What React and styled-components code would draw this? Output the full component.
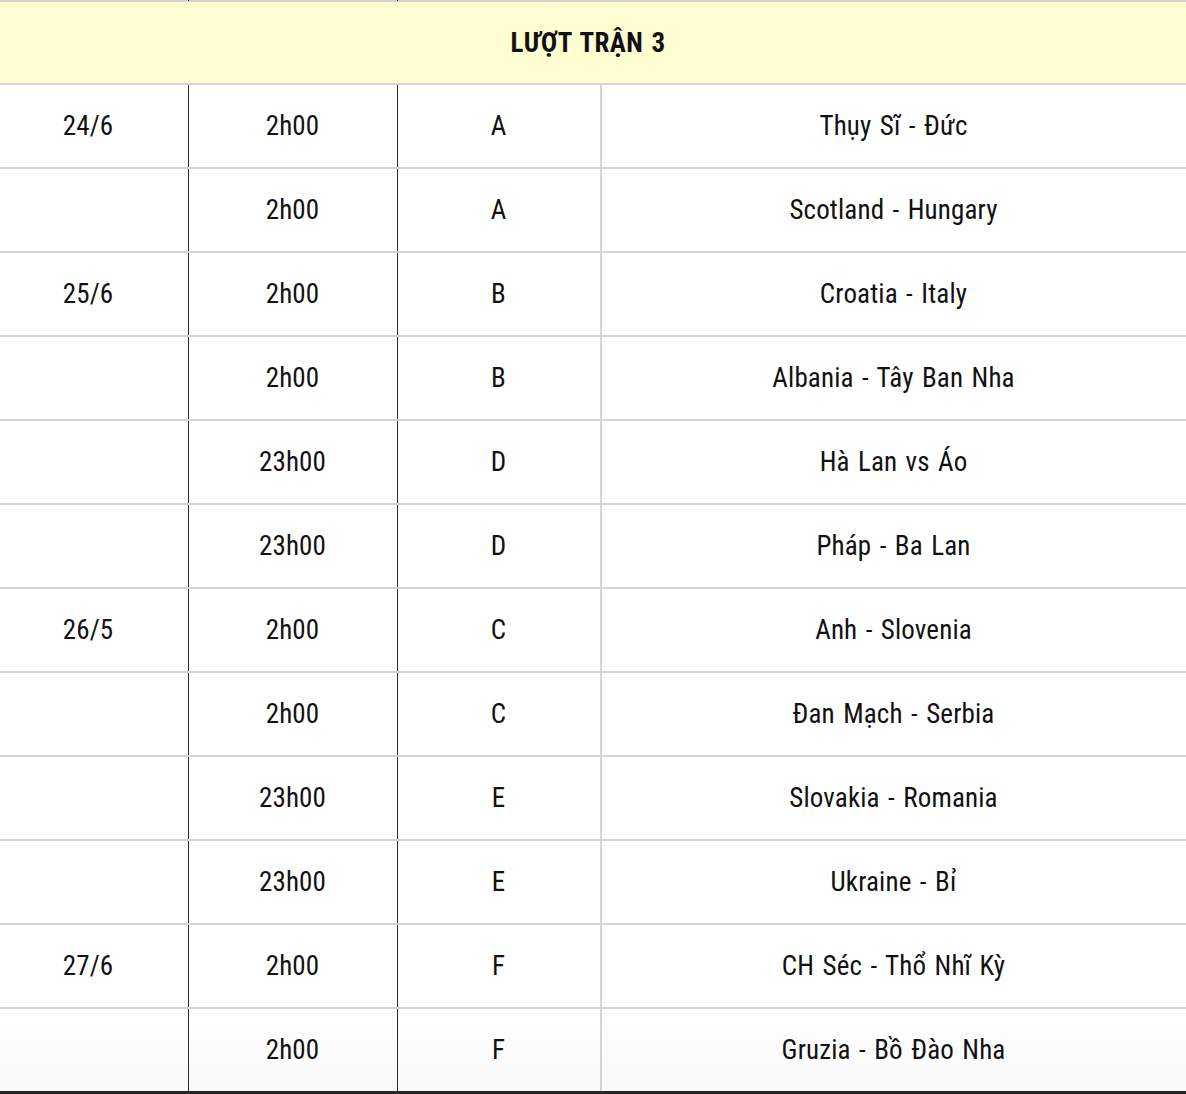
import React from 'react';
import styled, {createGlobalStyle} from "styled-components";

const GlobalStyle = createGlobalStyle`
    html, body {
        margin: 0;
        padding: 0;
        background: #ffffff;
    }
    body {
        font-family: "Roboto", "Liberation Sans", sans-serif;
        font-stretch: condensed;
        color: #111111;
    }
`;

const Table = styled.div`
    width: 1186px;
    display: flex;
    flex-direction: column;
`;

const Columns = `
    display: grid;
    grid-template-columns: 189px 209px 204px 1fr;
`;

const Stub = styled.div`
    ${Columns}
    height: 1px;
`;

const StubCell = styled.div`
    border-right: ${props => props.$dark ? "1px solid #2a2a2a" : props.$light ? "2px solid #d4d4d4" : "none"};
    background: #d4d4d4;
`;

const Header = styled.div`
    height: 81px;
    border-top: 1px solid #d4d4d4;
    border-bottom: 2px solid #d4d4d4;
    background: #fffdd2;
    display: flex;
    align-items: center;
    justify-content: center;
    padding-right: 10px;
    font-size: 27px;
    font-weight: 700;
    word-spacing: 2px;
    letter-spacing: 0.3px;
`;

const Row = styled.div`
    ${Columns}
    height: 82px;
    border-bottom: ${props => props.$last ? "4px solid #262626" : "2px solid #d4d4d4"};
    background: ${props => props.$last ? "linear-gradient(#ffffff, #f9f9f9)" : "#ffffff"};
`;

const Cell = styled.div`
    display: flex;
    align-items: center;
    justify-content: center;
    font-size: 27px;
    word-spacing: 2px;
    letter-spacing: 0.15px;
    padding-right: ${props => props.$shift ? "12px" : "1px"};
    border-right: ${props => props.$dark ? "1px solid #2a2a2a" : props.$light ? "2px solid #d4d4d4" : "none"};
`;

const matches = [
    {date: "24/6", time: "2h00", group: "A", teams: "Thụy Sĩ - Đức"},
    {date: "", time: "2h00", group: "A", teams: "Scotland - Hungary"},
    {date: "25/6", time: "2h00", group: "B", teams: "Croatia - Italy"},
    {date: "", time: "2h00", group: "B", teams: "Albania - Tây Ban Nha"},
    {date: "", time: "23h00", group: "D", teams: "Hà Lan vs Áo"},
    {date: "", time: "23h00", group: "D", teams: "Pháp - Ba Lan"},
    {date: "26/5", time: "2h00", group: "C", teams: "Anh - Slovenia"},
    {date: "", time: "2h00", group: "C", teams: "Đan Mạch - Serbia"},
    {date: "", time: "23h00", group: "E", teams: "Slovakia - Romania"},
    {date: "", time: "23h00", group: "E", teams: "Ukraine - Bỉ"},
    {date: "27/6", time: "2h00", group: "F", teams: "CH Séc - Thổ Nhĩ Kỳ"},
    {date: "", time: "2h00", group: "F", teams: "Gruzia - Bồ Đào Nha"},
];

export default function App() {
    return (
        <Table>
            <GlobalStyle/>
            <Stub>
                <StubCell $dark/>
                <StubCell $dark/>
                <StubCell $light/>
                <StubCell/>
            </Stub>
            <Header>LƯỢT TRẬN 3</Header>
            {matches.map((m, i) => (
                <Row key={i} $last={i === matches.length - 1}>
                    <Cell $dark $shift>{m.date}</Cell>
                    <Cell $dark>{m.time}</Cell>
                    <Cell $light>{m.group}</Cell>
                    <Cell>{m.teams}</Cell>
                </Row>
            ))}
        </Table>
    );
}
